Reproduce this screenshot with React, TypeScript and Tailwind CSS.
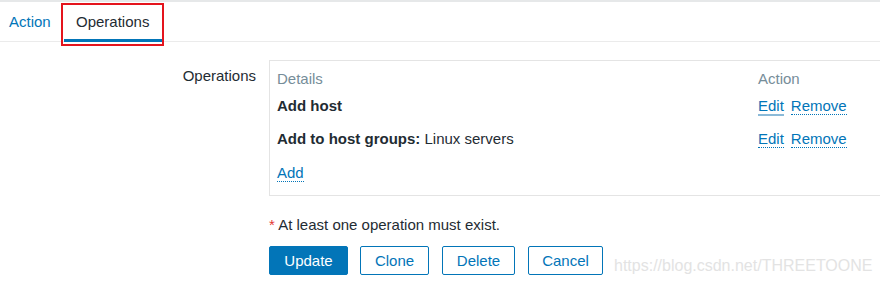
import React from "react";

const ops = [
  { bold: "Add host", rest: "", h: "h-[33px]", focus: true },
  { bold: "Add to host groups:", rest: " Linux servers", h: "h-[34px]", focus: false },
];

const buttons = [
  { label: "Update", w: "w-[79px]", primary: true },
  { label: "Clone", w: "w-[69px]", primary: false },
  { label: "Delete", w: "w-[73px]", primary: false },
  { label: "Cancel", w: "w-[75px]", primary: false },
];

export default function App() {
  return (
    <div className="relative w-[880px] h-[284px] overflow-hidden bg-white font-['Liberation_Sans',Arial,sans-serif] text-[15px] leading-[17px] text-[#1f2c33]">
      {/* top strip */}
      <div className="h-[2px] bg-[#e6e8e9]" />

      {/* tabs */}
      <div className="flex h-[40px] border-b border-[#ebebeb]">
        <div className="px-[9px] pt-[11px] text-[#0275b8]">Action</div>
        <div className="relative ml-[4px] -mb-px h-[40px] w-[98px] border-b-[3px] border-[#0275b8] pt-[11px] text-center">
          Operations
          <div className="absolute left-[-3px] top-[1px] h-[43px] w-[103px] border-2 border-[#e4141d]" />
        </div>
      </div>

      {/* form row */}
      <div className="mt-[18px] flex gap-[13px]">
        <div className="w-[256px] shrink-0 pt-[7px] text-right">Operations</div>
        <div className="w-[640px] shrink-0 border border-[#e4e4e4] px-[7px] pt-[9px] pb-[13px]">
          <div className="grid grid-cols-[481px_1fr] h-[27px] text-[#768d99]">
            <div>Details</div>
            <div>Action</div>
          </div>
          {ops.map((op) => (
            <div key={op.bold} className={`grid grid-cols-[481px_1fr] ${op.h}`}>
              <div>
                <span className="font-bold">{op.bold}</span>
                {op.rest}
              </div>
              <div className="flex gap-[7px] items-start text-[#0275b8]">
                <span
                  className={
                    op.focus
                      ? "border-b-2 border-[#8bbad8]"
                      : "border-b border-dotted border-[#0275b8]"
                  }
                >
                  Edit
                </span>
                <span className="border-b border-dotted border-[#0275b8]">Remove</span>
              </div>
            </div>
          ))}
          <div className="flex">
            <span className="border-b border-dotted border-[#0275b8] text-[#0275b8]">Add</span>
          </div>
        </div>
      </div>

      {/* note */}
      <div className="mt-[20px] ml-[269px]">
        <span className="text-[#e33734]">*</span> At least one operation must exist.
      </div>

      {/* buttons */}
      <div className="mt-[13px] ml-[269px] flex">
        {buttons.map((b, i) => (
          <div
            key={b.label}
            className={`${b.w} ${i === 0 ? "" : i === 1 ? "ml-[12px]" : "ml-[13px]"} flex h-[29px] items-center justify-center rounded-[2px] border border-[#0275b8] ${
              b.primary ? "bg-[#0275b8] text-white" : "bg-white text-[#0275b8]"
            }`}
          >
            {b.label}
          </div>
        ))}
      </div>

      {/* watermark */}
      <div className="absolute left-[614px] top-[257px] text-[16px] leading-[18px] text-[#e3e3e3]">
        https://blog.csdn.net/THREETOONE
      </div>
    </div>
  );
}
